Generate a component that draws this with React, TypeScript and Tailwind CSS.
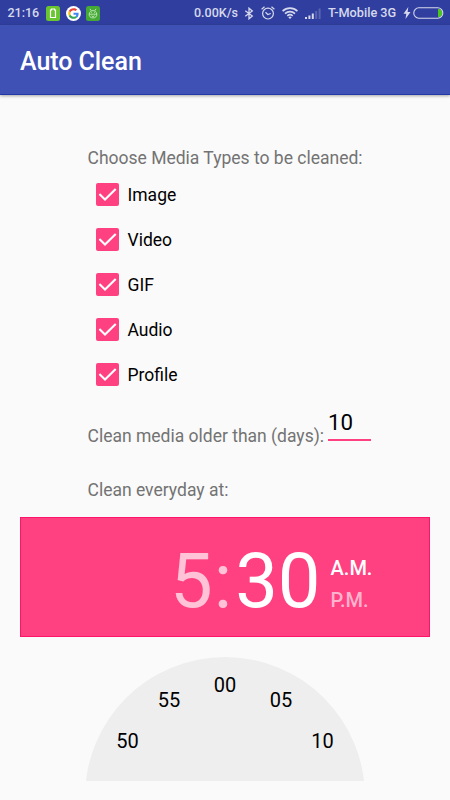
import React from 'react';

const mediaTypes = ['Image', 'Video', 'GIF', 'Audio', 'Profile'];

const minutes = [
  { label: '50', x: 42.5, y: 84 },
  { label: '55', x: 84, y: 43 },
  { label: '00', x: 140, y: 27.5 },
  { label: '05', x: 196, y: 43 },
  { label: '10', x: 237.5, y: 84 },
];

function StatusBar() {
  return (
    <div className="flex h-[25px] items-center bg-[#303f9f] pt-px text-[12.5px] font-medium text-[#d6d9ec]">
      <span className="ml-[7.5px] w-[38.5px] whitespace-nowrap">21:16</span>
      {/* Notifications */}
      <svg className="h-[15px] w-[14px]" viewBox="0 0 14 15">
        <rect width="14" height="15" rx="2.5" fill="#69c62f" />
        <path d="M4.5 4h1V3h3v1h1v7.5h-5z" fill="none" stroke="#fff" strokeWidth="1.2" />
      </svg>
      <svg className="ml-[6px] h-[15px] w-[15px]" viewBox="0 0 48 48">
        <circle cx="24" cy="24" r="24" fill="#fff" />
        <g transform="translate(7 7) scale(.71)">
          <path fill="#EA4335" d="M24 9.5c3.54 0 6.71 1.22 9.21 3.6l6.85-6.85C35.9 2.38 30.47 0 24 0 14.62 0 6.51 5.38 2.56 13.22l7.98 6.19C12.43 13.72 17.74 9.5 24 9.5z" />
          <path fill="#4285F4" d="M46.98 24.55c0-1.57-.15-3.09-.38-4.55H24v9.02h12.94c-.58 2.96-2.26 5.48-4.78 7.18l7.73 6c4.51-4.18 7.09-10.36 7.09-17.65z" />
          <path fill="#FBBC05" d="M10.53 28.59a14.5 14.5 0 0 1 0-9.18l-7.98-6.19a24 24 0 0 0 0 21.56z" />
          <path fill="#34A853" d="M24 48c6.48 0 11.93-2.13 15.89-5.81l-7.73-6c-2.15 1.45-4.92 2.3-8.16 2.3-6.26 0-11.57-4.22-13.47-9.91l-7.98 6.19C6.51 42.62 14.62 48 24 48z" />
        </g>
      </svg>
      <svg className="ml-[5px] h-[15px] w-[14px]" viewBox="0 0 14 15">
        <rect width="14" height="15" rx="2.5" fill="#45a936" />
        <g fill="none" stroke="#d5f2cc" strokeWidth=".8">
          <path d="M4 2.8l1.2 1.9M10 2.8L8.8 4.7M3.2 8.2C3.5 3.4 10.5 3.4 10.8 8.2c.5 5-8.1 5-7.6 0zM3.2 8.2h7.6" />
          <path d="M5.3 6.5h.8M8 6.5h.8M5.5 9.7l1.5 1 1.5-1" />
        </g>
      </svg>

      {/* System indicators */}
      <span className="ml-[94px] w-[45px] whitespace-nowrap">0.00K/s</span>
      <svg className="ml-[5px] h-[13px] w-[10px]" viewBox="0 0 10 13" fill="none" stroke="currentColor" strokeWidth="1.3">
        <path d="M1.3 3.7l7 5.3L5 11.8V1.2L8.3 4l-7 5.3" />
      </svg>
      <svg className="ml-[7px] h-[14px] w-[14px]" viewBox="0 0 14 14" fill="none" stroke="currentColor" strokeWidth="1.2">
        <circle cx="7" cy="7.6" r="5.4" />
        <path d="M.6 3.3L3.5.8M13.4 3.3L10.5.8M4.5 6.3l2.3 2.2 3-1" />
      </svg>
      <svg className="ml-[7px] h-[12px] w-[16px]" viewBox="0 0 16 12" fill="none" stroke="currentColor" strokeWidth="1.7">
        <path d="M.6 4.1c4.2-4 10.6-4 14.8 0M3 6.6c2.9-2.7 7.1-2.7 10 0M5.3 8.9c1.6-1.4 3.8-1.4 5.4 0" />
        <path d="M6.3 10.2Q8 9 9.7 10.2L8 12z" fill="currentColor" stroke="none" />
      </svg>
      <svg className="ml-[7px] h-[11px] w-[16px]" viewBox="0 0 16 11" fill="currentColor">
        <path d="M0 9h2v2H0zM3.4 7.5h2V11h-2zM6.8 5.5h2V11h-2z" />
        <path d="M10.2 3h2v8h-2zM13.6.5h2V11h-2z" opacity=".25" />
      </svg>
      <span className="ml-[7px] w-[69px] whitespace-nowrap text-[12.7px]">T-Mobile 3G</span>
      <svg className="ml-[6px] h-[12px] w-[8px]" viewBox="0 0 8 12" fill="currentColor">
        <path d="M5.3 0L.5 6.7h2.8L2.5 12 7.5 5H4.6z" />
      </svg>
      <svg className="ml-[2px] h-[12px] w-[31px]" viewBox="0 0 31 12">
        <path d="M25 2h1.5c2 1 2.7 2.3 2.7 4s-.7 3-2.7 4H25z" fill="#4cc51c" />
        <rect x=".8" y=".8" width="29" height="10.4" rx="5" fill="none" stroke="currentColor" strokeWidth="1.1" />
      </svg>
    </div>
  );
}

function MediaOption({ label }: { label: string }) {
  return (
    <label className="flex h-[45px] items-center pl-[8.5px] text-[17.5px] text-black">
      <span className="mr-[8.5px] h-[23px] w-[23px] rounded-[2px] bg-[#ff4081]">
        <svg className="h-[23px] w-[23px]" viewBox="0 0 23 23" fill="none" stroke="#fff" strokeWidth="2.1">
          <path d="M3.4 11.1l5.6 5.5L19.7 5.9" />
        </svg>
      </span>
      <span className="pt-px">{label}</span>
    </label>
  );
}

export default function App() {
  return (
    <div className="flex h-[800px] w-[450px] flex-col overflow-hidden bg-[#fafafa] font-[Roboto,sans-serif] text-[#737373]">
      <StatusBar />
      <header className="flex h-[70px] flex-shrink-0 items-center border-b border-[#2338a8] bg-[#3f51b5] pl-5 pt-[4px] shadow-[0_1px_3px_rgba(0,0,0,0.35)]">
        <h1 className="text-[25px] font-medium tracking-[-0.05px] text-white">Auto Clean</h1>
      </header>

      <main className="flex flex-col px-5 pt-[52px]">
        <section className="pl-[67.5px] text-[17.5px] leading-[22px]">
          <p>Choose Media Types to be cleaned:</p>
          <div className="mt-[2.5px]">
            {mediaTypes.map((type) => (
              <MediaOption key={type} label={type} />
            ))}
          </div>
          <div className="mt-[.5px] flex h-[50px] items-end">
            <span className="w-[240.5px] whitespace-nowrap">Clean media older than (days):</span>
            <span className="mb-[6px] h-[34px] w-[43px] border-b-2 border-[#ff4081] pt-[2px] text-[22.3px] leading-[26px] text-black">10</span>
          </div>
          <p className="mt-[32px]">Clean everyday at:</p>
        </section>

        {/* Time header */}
        <section className="mt-[16px] flex h-[120px] items-center border border-[#ff1469] bg-[#ff4081] pl-[149px] text-white">
          <div className="flex pt-[8px] text-[76px] leading-[88px]">
            <span className="text-[#ffc2d6]">5</span>
            <span className="ml-px mr-[3px] text-[#ffc2d6]">:</span>
            <span>30</span>
          </div>
          <div className="ml-[10px] pt-[13px] text-[20px] font-medium leading-[32px]">
            <div>A.M.</div>
            <div className="text-[#ffb3cd]">P.M.</div>
          </div>
        </section>

        <section className="relative mx-auto mt-[20px] h-[124px] w-[280px] overflow-hidden text-[20px] text-black">
          <div className="h-[280px] w-[280px] rounded-full bg-[#eeeeee]"></div>
          {minutes.map((m) => (
            <span
              key={m.label}
              className="absolute -translate-x-1/2 -translate-y-1/2 leading-[24px]"
              style={{ left: m.x, top: m.y }}
            >
              {m.label}
            </span>
          ))}
        </section>
      </main>
    </div>
  );
}
